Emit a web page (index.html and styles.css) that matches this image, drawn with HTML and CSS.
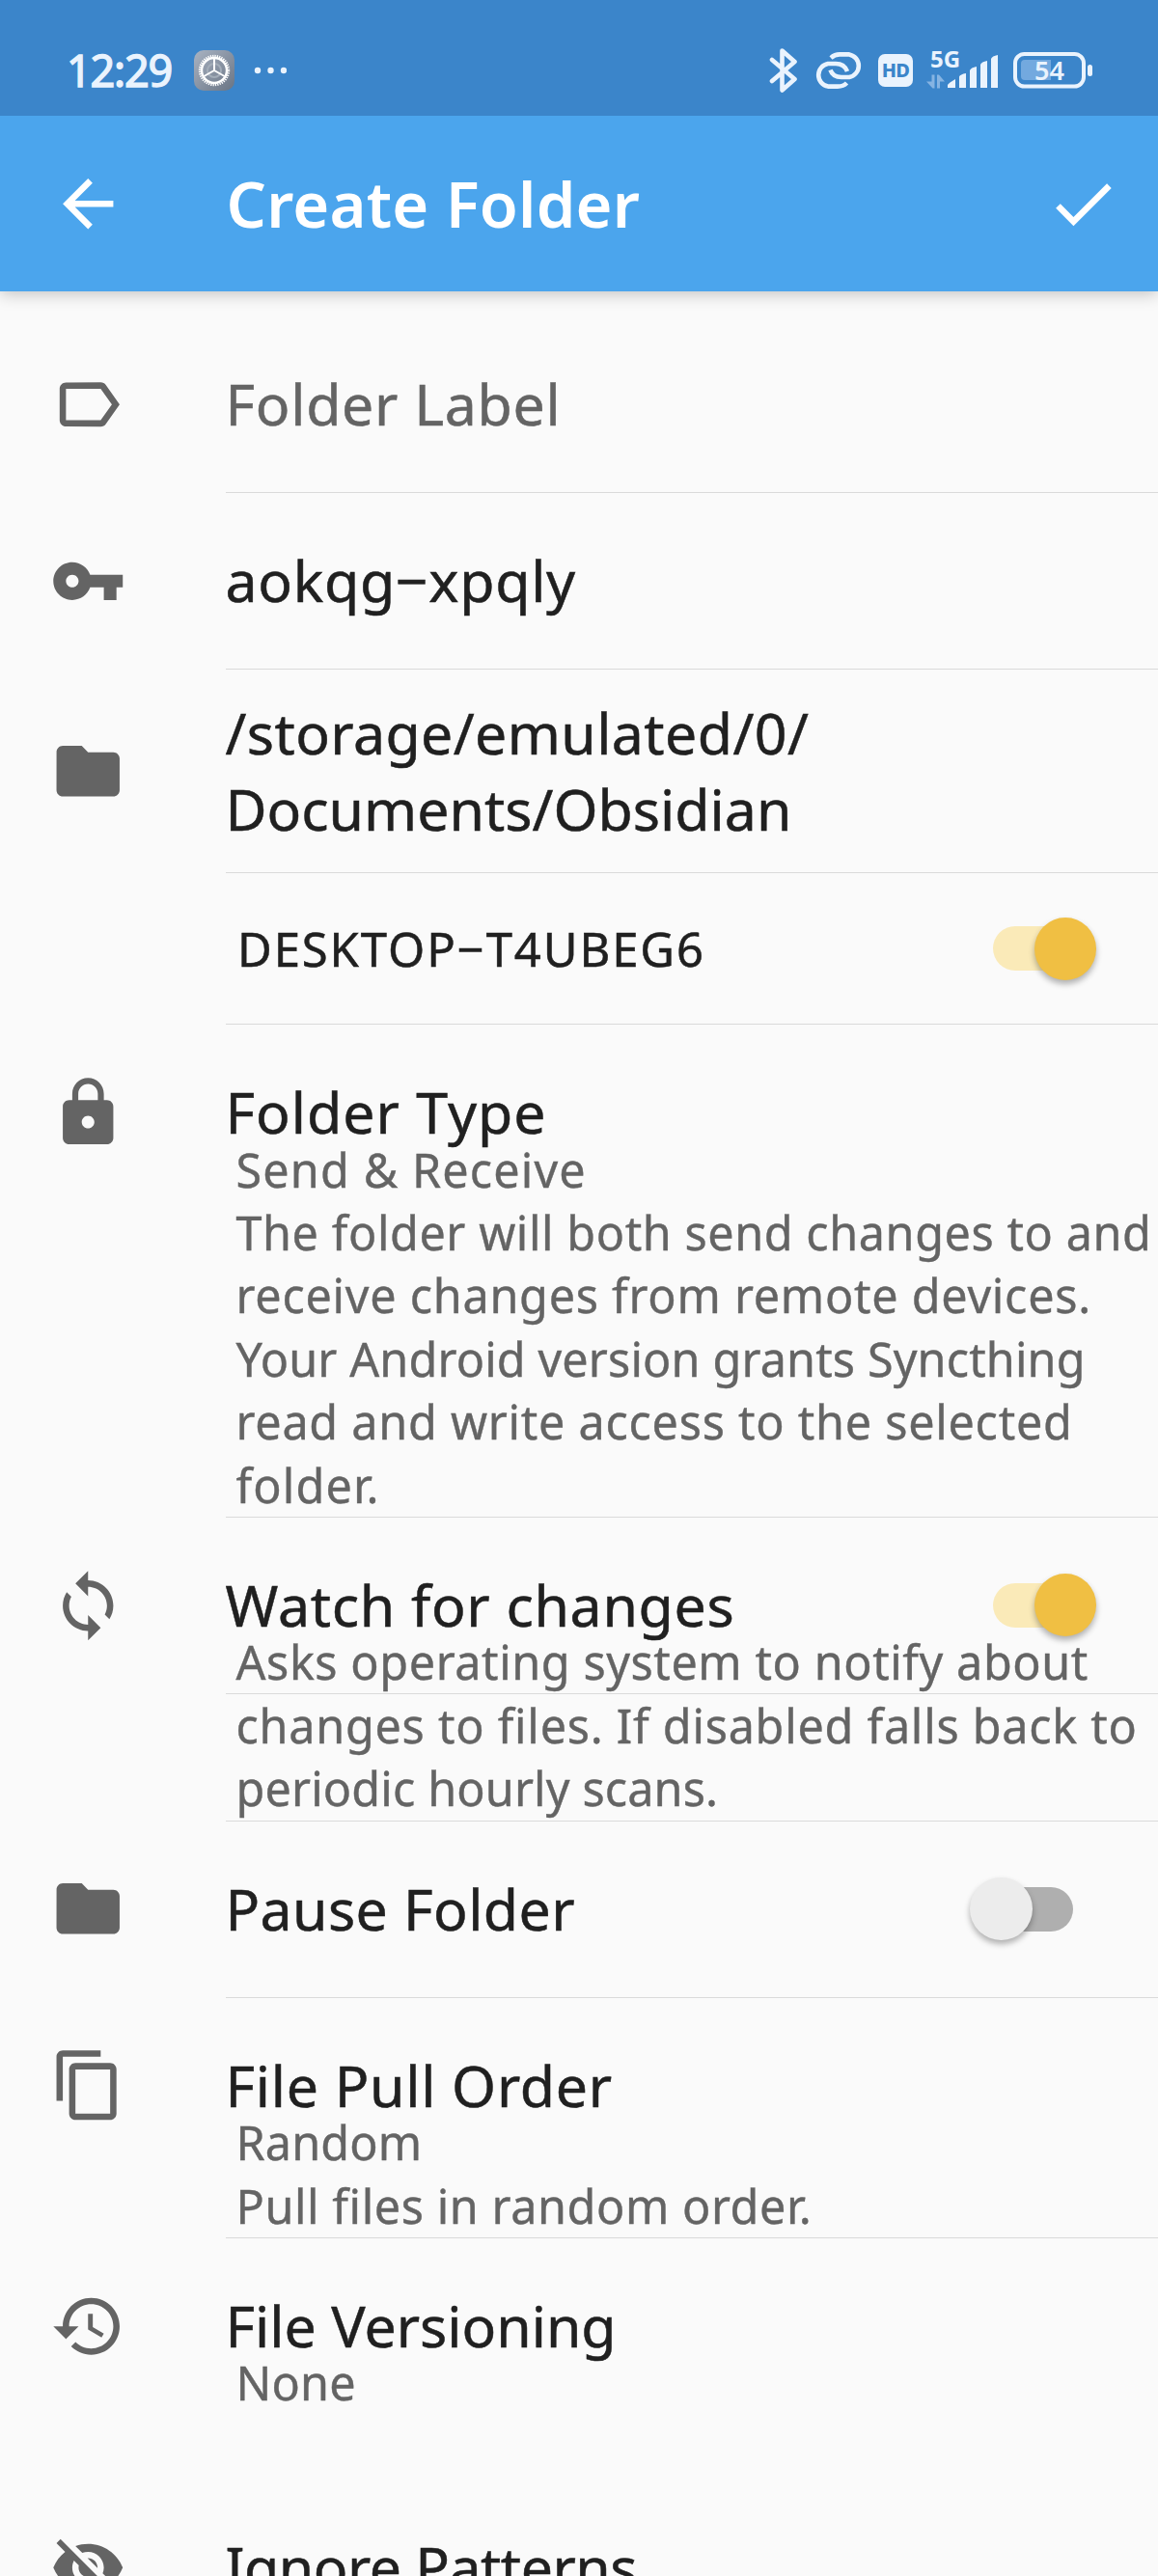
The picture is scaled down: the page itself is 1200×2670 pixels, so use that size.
FILE: index.html
```html
<!DOCTYPE html>
<html lang="en">
<head>
<meta charset="utf-8">
<title>Create Folder</title>
<link rel="stylesheet" href="styles.css">
</head>
<body>
<div class="statusbar">
  <span class="clock">12:29</span>
  <svg class="settings" width="42" height="42" viewBox="0 0 42 42">
    <defs><linearGradient id="tile" x1="0" y1="0" x2="1" y2="1"><stop offset="0" stop-color="#a9b3c2"/><stop offset="1" stop-color="#697484"/></linearGradient></defs>
    <rect width="42" height="42" rx="10" fill="url(#tile)"/>
    <circle cx="21" cy="21" r="7" fill="none" stroke="#a3adb9" stroke-width="2"/>
    <circle cx="21" cy="21" r="15" fill="none" stroke="#fff" stroke-width="2.4" stroke-dasharray="1.3 1.056"/>
    <circle cx="21" cy="21" r="13" fill="none" stroke="#fff" stroke-width="2.4"/>
    <path d="M21 8v13M21 21l-11.5 6.5M21 21l11.500 6.500" stroke="#fff" stroke-width="2" fill="none"/>
  </svg>
  <svg class="more" width="34" height="8" viewBox="0 0 34 8" fill="#eaf3fd"><circle cx="4" cy="4" r="3.200"/><circle cx="17.500" cy="4" r="3.200"/><circle cx="31" cy="4" r="3.200"/></svg>
  <div class="indicators">
    <svg width="30" height="46" viewBox="0 0 30 46" fill="none" stroke="#eaf3fd" stroke-width="4.600" stroke-linecap="round" stroke-linejoin="round"><path d="M3 12L26.500 32L13.500 43.500V2.500L26.500 14L3 34"/></svg>
    <svg class="link" width="50" height="38" viewBox="0 0 50 38" fill="none" stroke="#eaf3fd" stroke-width="4.600"><path d="M17 6Q21 2.400 26 2.400H36A12 12 0 0 1 36 26H28Q19 26 16.500 18.500"/><path d="M33.500 32Q30 35.600 24 35.600H14A12 12 0 0 1 14 12H22Q31 12 34 20"/></svg>
    <span class="hd">HD</span>
    <svg class="signal" width="76" height="46" viewBox="0 0 76 46" fill="#eaf3fd">
      <text class="gen" x="4" y="20">5G</text>
      <path fill="#86b4e2" d="M5.500 27.500h3V41.500H6.500L0 34.500H5.500zM11 27.500h2l6 7H14V41.500h-3z"/>
      <path d="M22 38Q23 36 30 32V41H22zM34 29.500Q35 27 41 26V41H34zM45 23Q46 20 52 19V41H45zM56 17Q57 14 63 13V41H56zM67 11Q68 8 74 7V41H67z"/>
    </svg>
    <svg class="battery" width="84" height="38" viewBox="0 0 84 38">
      <path d="M12 8h27V29H12a4 4 0 0 1-4-4V12a4 4 0 0 1 4-4z" fill="#73a9df"/>
      <rect x="2" y="2" width="71" height="33.500" rx="9.500" fill="none" stroke="#eaf3fd" stroke-width="4"/>
      <rect x="77" y="13" width="5" height="12" rx="2.500" fill="#eaf3fd"/>
      <text class="level" x="37.500" y="28.500" text-anchor="middle">54</text>
    </svg>
  </div>
</div>
<header class="toolbar">
  <svg class="icon" viewBox="0 0 24 24"><path d="M20 11H7.830l5.590-5.590L12 4l-8 8 8 8 1.410-1.410L7.830 13H20v-2z"/></svg>
  <h1 class="title">Create Folder</h1>
  <svg class="icon" viewBox="0 0 24 24"><path d="M9 16.170L4.830 12l-1.420 1.410L9 19 21 7l-1.410-1.410z"/></svg>
</header>
<main class="list">
  <section class="row">
    <svg class="icon" viewBox="0 0 24 24"><path d="M17.630 5.840C17.270 5.330 16.670 5 16 5L5 5.010C3.900 5.010 3 5.900 3 7v10c0 1.100.9 1.990 2 1.990L16 19c.67 0 1.270-.33 1.630-.84L22 12l-4.370-6.160zM16 17H5V7h11l3.550 5L16 17z"/></svg>
    <div class="main line"><span class="label hint">Folder Label</span></div>
  </section>
  <section class="row">
    <svg class="icon" viewBox="0 0 24 24"><path d="M12.650 10C11.830 7.670 9.610 6 7 6c-3.310 0-6 2.690-6 6s2.690 6 6 6c2.610 0 4.830-1.670 5.650-4H17v4h4v-4h2v-4H12.650zM7 14c-1.100 0-2-.9-2-2s.9-2 2-2 2 .9 2 2-.9 2-2 2z"/></svg>
    <div class="main line"><span class="label">aokqg−xpqly</span></div>
  </section>
  <section class="row tall">
    <svg class="icon" viewBox="0 0 24 24"><path d="M10 4H4c-1.100 0-1.990.9-1.990 2L2 18c0 1.100.9 2 2 2h16c1.100 0 2-.9 2-2V8c0-1.100-.9-2-2-2h-8l-2-2z"/></svg>
    <div class="main line"><span class="label normal"><span class="even">/storage/emulated/0/</span><br>Documents/Obsidian</span></div>
  </section>
  <section class="row device">
    <div class="main line"><span class="name">DESKTOP−T4UBEG6</span><span class="switch on"><i class="thumb"></i></span></div>
  </section>
  <section class="row">
    <svg class="icon" viewBox="0 0 24 24"><path d="M18 8h-1V6c0-2.760-2.240-5-5-5S7 3.240 7 6v2H6c-1.100 0-2 .9-2 2v10c0 1.100.9 2 2 2h12c1.100 0 2-.9 2-2V10c0-1.100-.9-2-2-2zm-6 9c-1.100 0-2-.9-2-2s.9-2 2-2 2 .9 2 2-.9 2-2 2zM8.900 8V6c0-1.710 1.390-3.100 3.100-3.100s3.100 1.390 3.100 3.100v2z"/></svg>
    <div class="main"><span class="label loose">Folder Type</span></div>
    <p class="note line"><span class="widest">Send &amp; Receive</span><br>The folder will both send changes to and<br><span class="wide">receive changes from remote devices.</span><br><span class="snug">Your Android version grants Syncthing</span><br><span class="wide">read and write access to the selected</span><br><span class="widest">folder.</span></p>
  </section>
  <section class="row">
    <svg class="icon" viewBox="0 0 24 24"><path d="M12 4V1L8 5l4 4V6c3.310 0 6 2.690 6 6 0 1.010-.25 1.970-.7 2.800l1.460 1.460C19.540 15.030 20 13.570 20 12c0-4.420-3.580-8-8-8zm0 14c-3.310 0-6-2.690-6-6 0-1.010.25-1.970.7-2.800L5.240 7.740C4.460 8.970 4 10.430 4 12c0 4.420 3.580 8 8 8v3l4-4-4-4v3z"/></svg>
    <div class="main line"><span class="label">Watch for changes</span><span class="switch on"><i class="thumb"></i></span></div>
    <p class="note line after-line">Asks operating system to notify about<br><span class="wide">changes to files. If disabled falls back to</span><br><span class="snug">periodic hourly scans.</span></p>
  </section>
  <section class="row">
    <svg class="icon" viewBox="0 0 24 24"><path d="M10 4H4c-1.100 0-1.990.9-1.990 2L2 18c0 1.100.9 2 2 2h16c1.100 0 2-.9 2-2V8c0-1.100-.9-2-2-2h-8l-2-2z"/></svg>
    <div class="main line"><span class="label even">Pause Folder</span><span class="switch"><i class="thumb"></i></span></div>
  </section>
  <section class="row">
    <svg class="icon" viewBox="0 0 24 24"><path d="M16 1H4c-1.100 0-2 .9-2 2v14h2V3h12V1zm3 4H8c-1.100 0-2 .9-2 2v14c0 1.100.9 2 2 2h11c1.100 0 2-.9 2-2V7c0-1.100-.9-2-2-2zm0 16H8V7h11v14z"/></svg>
    <div class="main"><span class="label">File Pull Order</span></div>
    <p class="note line"><span class="snug">Random</span><br>Pull files in random order.</p>
  </section>
  <section class="row versioning">
    <svg class="icon" viewBox="0 0 24 24"><path d="M13 3c-4.970 0-9 4.030-9 9H1l3.890 3.890.07.14L9 12H6c0-3.870 3.130-7 7-7s7 3.130 7 7-3.130 7-7 7c-1.930 0-3.680-.79-4.940-2.060l-1.420 1.420C8.270 19.990 10.510 21 13 21c4.970 0 9-4.030 9-9s-4.030-9-9-9zm-1 5v5l4.280 2.540.72-1.210-3.500-2.080V8H12z"/></svg>
    <div class="main"><span class="label normal">File Versioning</span></div>
    <p class="note"><span class="snug">None</span></p>
  </section>
  <section class="row">
    <svg class="icon" viewBox="0 0 24 24"><path d="M12 7c2.760 0 5 2.240 5 5 0 .65-.13 1.260-.36 1.830l2.920 2.920c1.510-1.260 2.700-2.890 3.430-4.750-1.730-4.390-6-7.500-11-7.500-1.400 0-2.740.25-3.980.7l2.160 2.160C10.740 7.130 11.350 7 12 7zM2 4.270l2.280 2.280.46.46C3.080 8.300 1.780 10.020 1 12c1.730 4.390 6 7.500 11 7.500 1.550 0 3.030-.3 4.380-.84l.42.42L19.730 22 21 20.730 3.270 3 2 4.270zM7.530 9.800l1.550 1.550c-.05.21-.08.43-.08.65 0 1.660 1.340 3 3 3 .22 0 .44-.03.65-.08l1.550 1.550c-.67.33-1.410.53-2.200.53-2.760 0-5-2.240-5-5 0-.79.2-1.530.53-2.200zm4.310-.78l3.150 3.150.02-.16c0-1.660-1.340-3-3-3l-.17.01z"/></svg>
    <div class="main"><span class="label tight">Ignore Patterns</span></div>
  </section>
</main>
</body>
</html>
```

FILE: styles.css
```css
* { box-sizing: border-box; }
body {
  margin: 0;
  height: 2670px;
  overflow: hidden;
  background: #fafafa;
  color: #202020;
  font-family: "Noto Sans", "Open Sans", sans-serif;
}
.statusbar {
  position: relative;
  z-index: 1;
  display: flex;
  align-items: center;
  height: 120px;
  padding: 26px 66px 0 69px;
  background: #3b85ca;
}
.clock {
  width: 132px;
  color: #eaf3fd;
  font-size: 45px;
  line-height: 60px;
  letter-spacing: -1.2px;
  -webkit-text-stroke: 1.400px #eaf3fd;
}
.more { margin-left: 20px; }
.indicators { display: flex; align-items: center; margin-left: auto; }
.indicators svg { display: block; }
.link { margin-left: 17px; }
.hd {
  width: 36px;
  height: 34px;
  margin-left: 16px;
  border-radius: 7px;
  background: #eaf3fd;
  color: #3b85ca;
  font-size: 20px;
  font-weight: 800;
  line-height: 34px;
  letter-spacing: -0.8px;
  text-align: center;
}
.signal { margin-left: 14px; }
.gen { font-size: 24px; font-weight: 700; }
.battery { margin-left: 14px; }
.level { fill: #eaf3fd; font-size: 27px; font-weight: 600; }
.toolbar {
  position: relative;
  display: flex;
  align-items: center;
  height: 182px;
  padding: 0 39px 0 52px;
  background: #4ba5ed;
  color: #fff;
  box-shadow: 0 3px 16px rgba(0, 0, 0, 0.22);
}
.title {
  flex: 1;
  margin: -1px 0 0 104px;
  font-size: 65px;
  font-weight: 600;
  line-height: 88px;
  letter-spacing: 0.2px;
}
.icon { width: 78.500px; height: 78.500px; fill: currentColor; }
.list { padding-top: 26px; }
.row {
  display: grid;
  grid-template-columns: 234px 1fr;
  grid-template-rows: 182px auto;
}
.row > .icon {
  grid-column: 1;
  grid-row: 1;
  align-self: center;
  margin-left: 52px;
  color: #646464;
}
.main {
  grid-column: 2;
  grid-row: 1;
  display: flex;
  align-items: center;
  justify-content: space-between;
  padding-right: 64px;
}
.line { box-shadow: 0 1px 0 #dadada; }
.row:has(> .line) { margin-bottom: 1px; }
.tall { grid-template-rows: 210px; }
.device { grid-template-rows: 156px; }
.label {
  margin: -1px 0 0 -0.5px;
  font-size: 59px;
  line-height: 79px;
  letter-spacing: 0.7px;
  white-space: nowrap;
  -webkit-text-stroke: 0.500px currentColor;
}
.hint { color: #646464; }
.normal { margin-top: 0; letter-spacing: 0; }
.even { letter-spacing: 0.4px; }
.loose { letter-spacing: 1px; }
.tight { letter-spacing: -0.5px; }
.name { margin-left: 12px; font-size: 49px; letter-spacing: 1.9px; -webkit-text-stroke: 0.500px currentColor; }
.note {
  grid-column: 2;
  margin: -64.500px 0 0;
  padding-left: 10.500px;
  color: #646464;
  font-size: 48.500px;
  line-height: 65.400px;
  letter-spacing: 0.58px;
  white-space: nowrap;
  -webkit-text-stroke: 0.400px currentColor;
}
.snug { letter-spacing: 0.15px; }
.wide { letter-spacing: 0.75px; }
.widest { letter-spacing: 1.15px; }
.note.after-line { margin-top: -64.500px; }
.versioning { margin-bottom: 67px; }
.switch {
  display: flex;
  align-items: center;
  width: 131px;
  height: 66px;
}
.switch::before {
  content: "";
  width: 83px;
  height: 46px;
  margin-left: 24px;
  border-radius: 23px;
  background: #afafaf;
}
.thumb {
  width: 65px;
  height: 65px;
  margin-left: -107px;
  border-radius: 50%;
  background: #ececec;
  box-shadow: 0 4px 6px rgba(0, 0, 0, 0.3);
}
.switch.on::before { background: #faeab8; }
.switch.on .thumb { margin-left: -39px; background: #f0bf43; }
```
